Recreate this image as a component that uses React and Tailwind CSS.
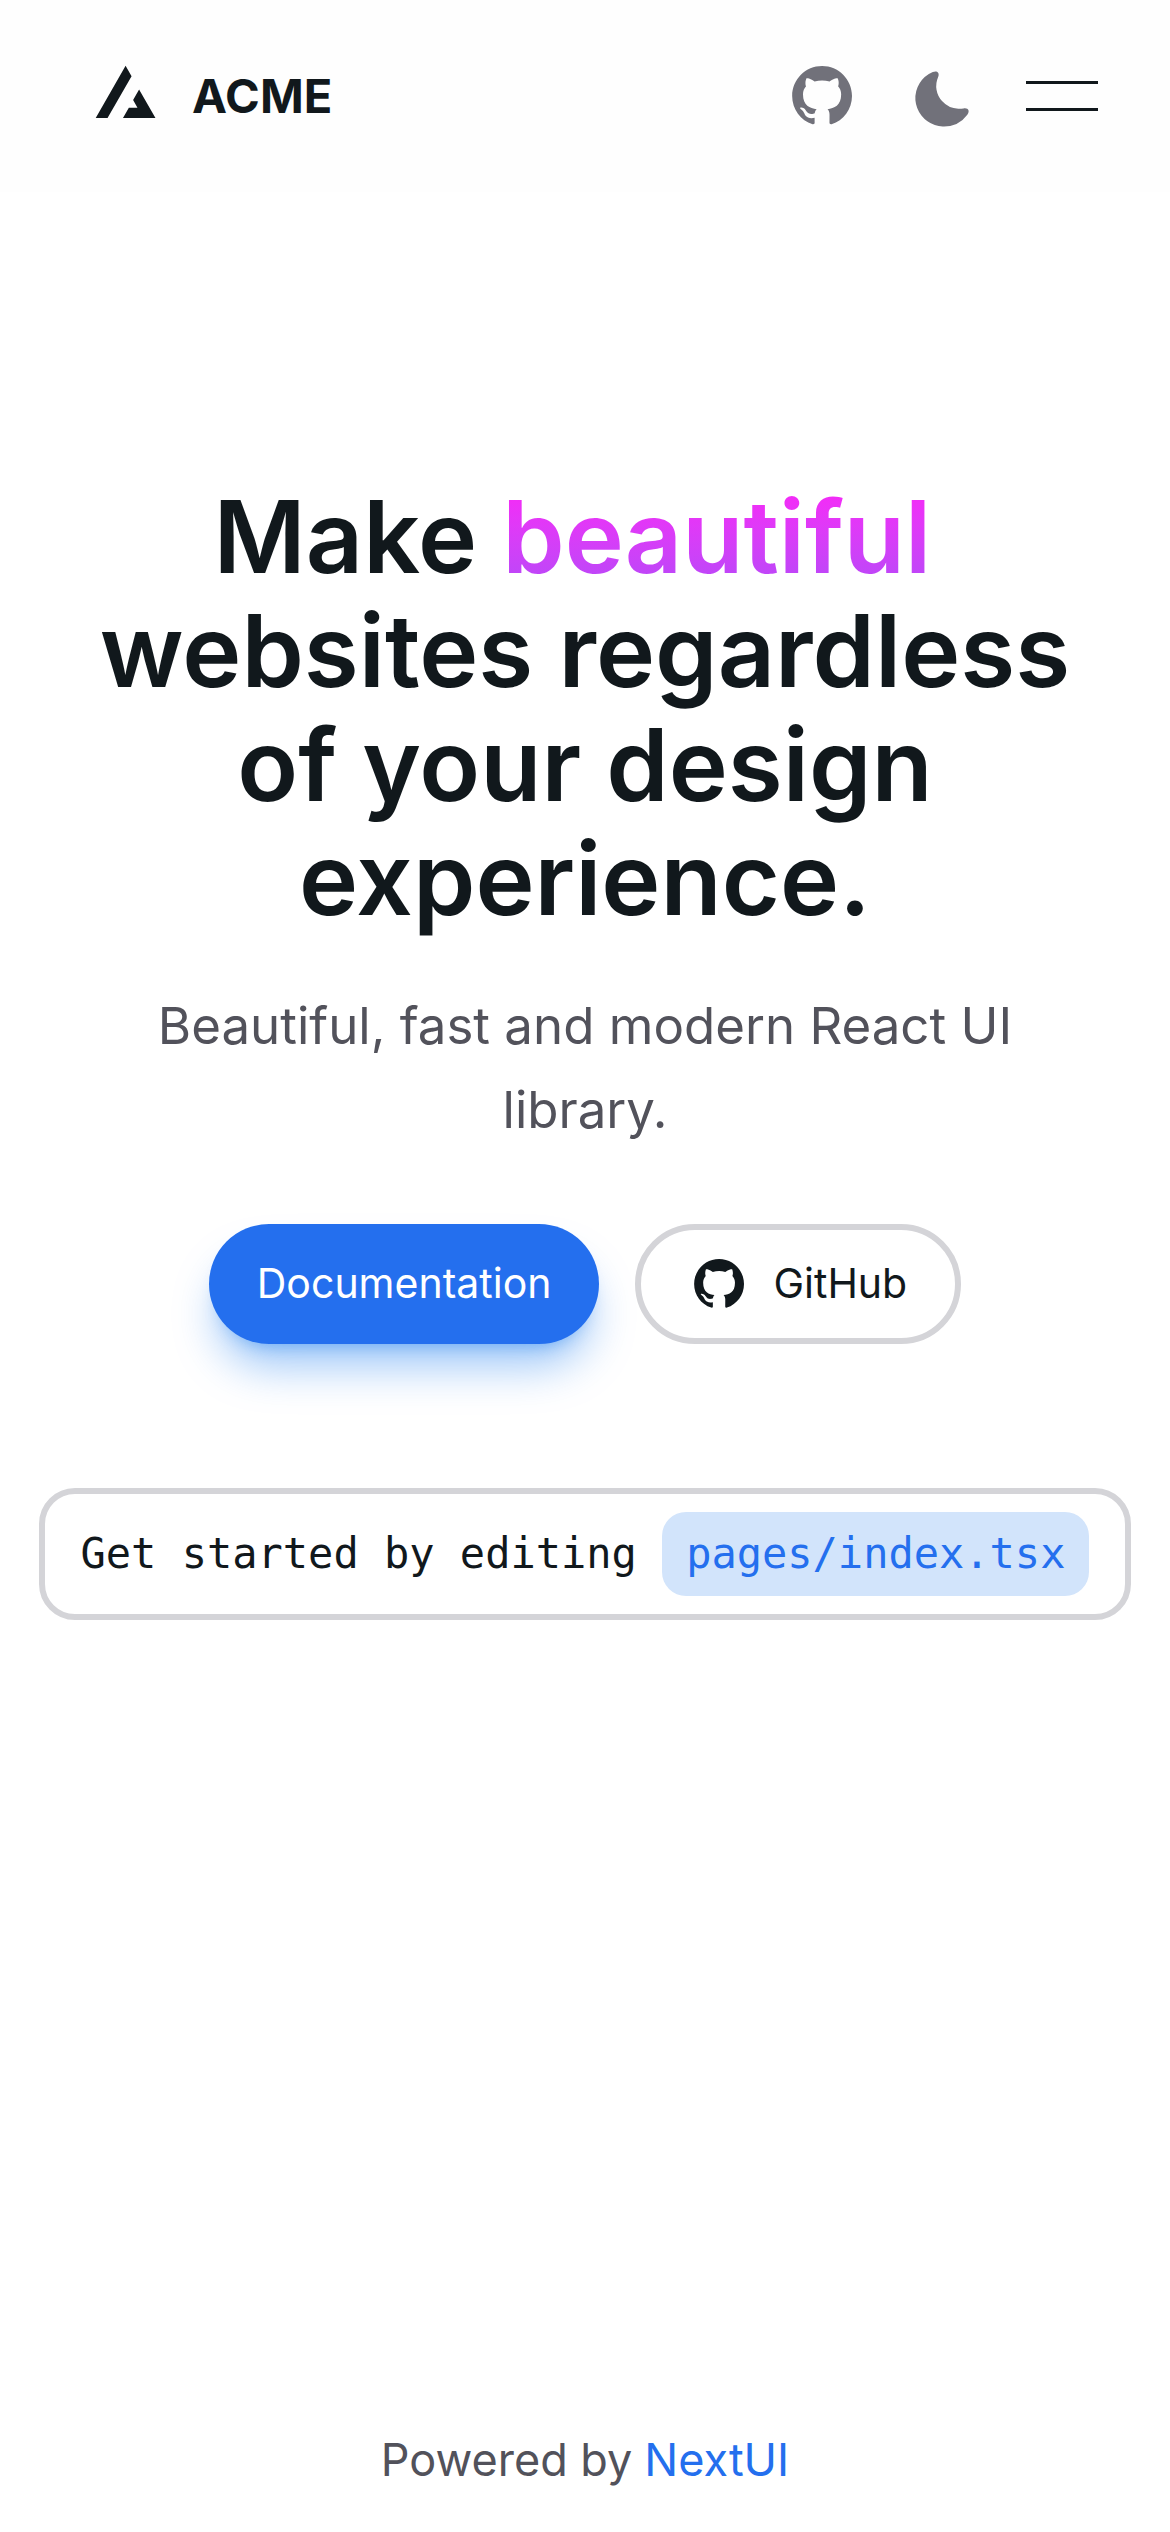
const inter = "font-['Inter','Liberation_Sans',sans-serif]";

function Logo() {
  return (
    <svg className="size-[108px]" viewBox="0 0 32 32" fill="none" aria-hidden="true">
      <path
        clipRule="evenodd"
        fillRule="evenodd"
        fill="currentColor"
        d="M17.6482 10.1305L15.8785 7.02583L7.02979 22.5499H10.5278L17.6482 10.1305ZM19.8798 14.0457L18.11 17.1983L19.394 19.4511H16.8453L15.1056 22.5499H24.7272L19.8798 14.0457Z"
      />
    </svg>
  );
}

function GithubIcon({ className }) {
  return (
    <svg className={className} viewBox="0 0 24 24" aria-hidden="true">
      <path
        clipRule="evenodd"
        fillRule="evenodd"
        fill="currentColor"
        d="M12.026 2c-5.509 0-9.974 4.465-9.974 9.974 0 4.406 2.857 8.145 6.821 9.465.499.09.679-.217.679-.481 0-.237-.008-.865-.011-1.696-2.775.602-3.361-1.338-3.361-1.338-.452-1.152-1.107-1.459-1.107-1.459-.905-.619.069-.605.069-.605 1.002.07 1.527 1.028 1.527 1.028.89 1.524 2.336 1.084 2.902.829.091-.645.351-1.085.635-1.334-2.214-.251-4.542-1.107-4.542-4.93 0-1.087.389-1.979 1.024-2.675-.101-.253-.446-1.268.099-2.64 0 0 .837-.269 2.742 1.021a9.582 9.582 0 0 1 2.496-.336 9.554 9.554 0 0 1 2.496.336c1.906-1.291 2.742-1.021 2.742-1.021.545 1.372.203 2.387.099 2.64.64.696 1.024 1.587 1.024 2.675 0 3.833-2.33 4.675-4.552 4.922.355.308.675.916.675 1.846 0 1.334-.012 2.41-.012 2.737 0 .267.178.577.687.479C19.146 20.115 22 16.379 22 11.974 22 6.465 17.535 2 12.026 2z"
      />
    </svg>
  );
}

function MoonIcon() {
  return (
    <svg className="size-[66px]" viewBox="0 0 24 24" aria-hidden="true">
      <path
        fill="currentColor"
        d="M21.53 15.93c-.16-.27-.61-.69-1.73-.49a8.46 8.46 0 01-1.88.13 8.409 8.409 0 01-5.91-2.82 8.068 8.068 0 01-1.44-8.66c.44-1.01.13-1.54-.09-1.76s-.77-.55-1.83-.11a10.318 10.318 0 00-6.32 10.21 10.475 10.475 0 007.04 8.99 10 10 0 002.89.55c.16.01.32.02.48.02a10.5 10.5 0 008.47-4.27c.67-.93.49-1.519.32-1.79z"
      />
    </svg>
  );
}

function Navbar() {
  return (
    <header className="flex h-48 items-center justify-between bg-[#fefefe] px-[72px]">
      <a href="#home" className="flex items-center gap-3">
        <Logo />
        <span className="text-[47px] font-bold">ACME</span>
      </a>
      <nav className="flex items-center gap-12">
        <a href="#github" aria-label="GitHub" className="text-[#71717a]">
          <GithubIcon className="size-[72px]" />
        </a>
        <button type="button" aria-label="Switch to dark mode" className="px-[3px] pt-1.5 text-[#71717a]">
          <MoonIcon />
        </button>
        <button type="button" aria-label="Open menu" className="flex w-[72px] flex-col gap-6">
          <span className="h-[3px] w-full bg-current" />
          <span className="h-[3px] w-full bg-current" />
        </button>
      </nav>
    </header>
  );
}

export default function App() {
  return (
    <div className={`flex min-h-screen flex-col bg-white text-[#11181c] ${inter}`}>
      <Navbar />
      <main className="flex grow flex-col items-center pt-72">
        <div className="px-[72px] text-center">
          <h1 className="text-[100px] leading-[114px] font-semibold">
            Make{" "}
            <span className="bg-linear-to-b from-[#ff1cf7] to-[#b249f8] bg-clip-text text-transparent">
              beautiful&nbsp;
            </span>
            <br />
            websites regardless
            <br />
            of your design
            <br />
            experience.
          </h1>
          <p className="mt-12 text-[51px] leading-[84px] text-[#52525b]">
            Beautiful, fast and modern React UI
            <br />
            library.
          </p>
        </div>
        <div className="mt-[72px] flex gap-9">
          <a
            href="#docs"
            className="flex h-[120px] items-center rounded-full bg-[#246fee] px-12 text-[41px] text-white shadow-[0_30px_45px_-9px_rgba(0,111,238,0.4),0_12px_18px_-12px_rgba(0,111,238,0.4)]"
          >
            Documentation
          </a>
          <a
            href="#github"
            className="flex h-[120px] items-center gap-6 rounded-full border-6 border-[#d4d4d8] px-12 text-[41px]"
          >
            <GithubIcon className="size-[60px]" />
            GitHub
          </a>
        </div>
        <div className="mt-36 rounded-[36px] border-6 border-[#d4d4d8] px-9 py-[18px] font-['DejaVu_Sans_Mono',monospace] text-[42px] leading-[84px] whitespace-nowrap">
          Get started by editing{" "}
          <code className="inline-block rounded-3xl bg-[#d2e4fb] px-6 font-['DejaVu_Sans_Mono',monospace] text-[#246fee]">
            pages/index.tsx
          </code>
        </div>
      </main>
      <footer className="flex items-center justify-center gap-3 py-9 text-[45px] leading-[72px]">
        <span className="text-[#52525b]">Powered by</span>
        <a href="#nextui" className="text-[#246fee]">
          NextUI
        </a>
      </footer>
    </div>
  );
}
